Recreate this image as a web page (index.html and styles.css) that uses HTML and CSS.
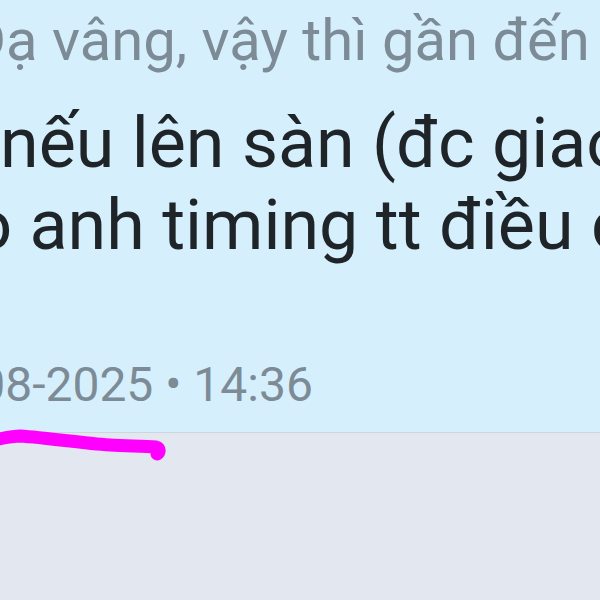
FILE: index.html
```html
<!DOCTYPE html>
<html lang="vi">
<head>
    <meta charset="UTF-8">
    <meta name="viewport" content="width=device-width, initial-scale=1.0">
    <title>Tin nhắn</title>
    <link rel="stylesheet" href="styles.css">
</head>
<body>
    <div class="chat">
        <div class="bubble">
            <div class="quote">Dạ vâng, vậy thì gần đến ngày rồi ạ</div>
            <div class="message">
                <div class="line line-first">nếu lên sàn (đc giao dịch)</div>
                <div class="line line-second">cho anh timing tt điều chỉnh</div>
            </div>
            <div class="meta">12-08-2025 • 14:36</div>
        </div>
        <div class="composer"></div>

        <svg class="scribble" width="200" height="40" viewBox="0 0 200 40">
            <path d="M-6 12 C 4 10, 12 8, 20 8 C 50 10, 80 15, 110 17 C 130 18, 145 18, 156 19 C 160 20, 160 24, 157 26" />
        </svg>
    </div>
</body>
</html>
```

FILE: styles.css
```css
:root {
    --bubble-bg: #d5f0fc;
    --page-bg: #e3e8f0;
    --text-color: #1e2428;
    --muted-color: #7d8b97;
    --marker: #ff00ff;
}

body {
    margin: 0;
    font-family: Roboto, 'Noto Sans', sans-serif;
    background-color: var(--page-bg);
    overflow: hidden;
}

.chat {
    position: relative;
    height: 600px;
    display: flex;
    flex-direction: column;
}

.bubble {
    height: 433px;
    box-sizing: border-box;
    background-color: var(--bubble-bg);
    padding-top: 6px;
    border-bottom: 1px solid #cbd7df;
    white-space: nowrap;
    overflow: hidden;
}

.quote {
    font-size: 58px;
    line-height: 68px;
    color: var(--muted-color);
    margin-left: -32px;
}

.message {
    margin-top: 28px;
    color: var(--text-color);
    font-size: 70px;
    line-height: 82px;
}

.line-first {
    margin-left: 0;
}

.line-second {
    margin-left: -103px;
}

.meta {
    margin-top: 91px;
    font-size: 48px;
    line-height: 56px;
    color: var(--muted-color);
    margin-left: -89px;
}

.composer {
    flex-grow: 1;
    background-color: var(--page-bg);
}

/* hand-drawn marker on top of the screenshot */
.scribble {
    position: absolute;
    left: 0;
    top: 428px;
    overflow: visible;
}

.scribble path {
    fill: none;
    stroke: var(--marker);
    stroke-width: 13;
    stroke-linecap: round;
    stroke-linejoin: round;
}
```
